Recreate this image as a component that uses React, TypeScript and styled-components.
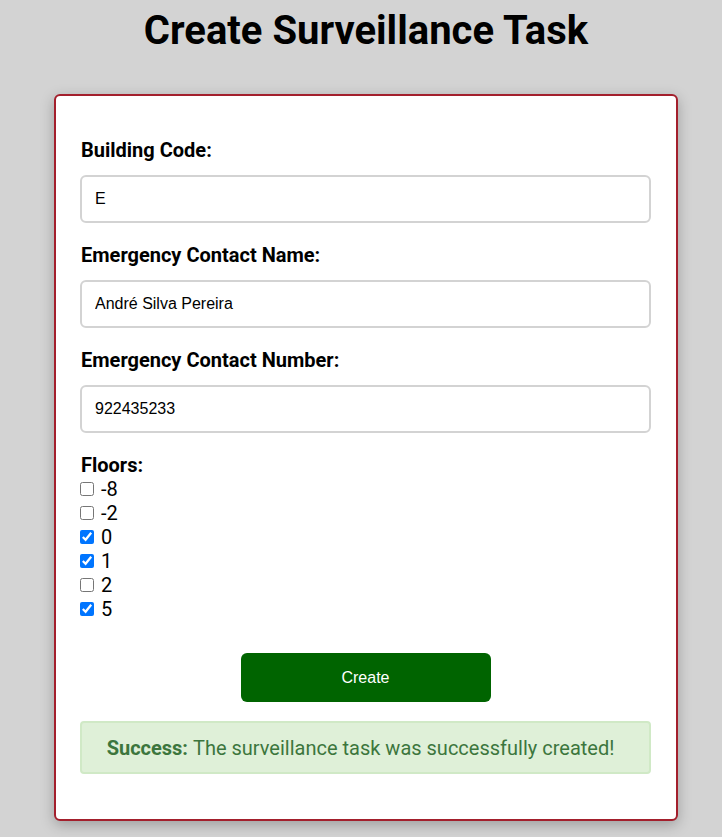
import React from "react";
import styled, { createGlobalStyle } from "styled-components";

const Global = createGlobalStyle`
  html, body { margin: 0; padding: 0; background: #d3d3d3; }
  body { font-family: Roboto, "Liberation Sans", sans-serif; }
`;

const Page = styled.div`
  padding: 0 0 20px 10px;
  display: flex;
  flex-direction: column;
  align-items: center;
`;

const Title = styled.h1`
  font-family: Roboto, sans-serif;
  font-weight: 700;
  font-size: 40px;
  line-height: 46px;
  margin: 8px 0 40px;
  color: #000;
`;

const Card = styled.form`
  box-sizing: border-box;
  width: 624px;
  background: #fff;
  border: 2px solid #a31f2c;
  border-radius: 6px;
  box-shadow: 0 4px 14px rgba(0, 0, 0, 0.25);
  padding: 42px 25px 45px 24px;
  display: flex;
  flex-direction: column;
`;

const Field = styled.div`
  display: flex;
  flex-direction: column;
  margin-bottom: 20px;
`;

const Label = styled.label`
  font-family: Roboto, sans-serif;
  font-weight: 700;
  font-size: 20px;
  line-height: 24px;
  color: #000;
  margin: 0 0 13px 1px;
`;

const Input = styled.input`
  box-sizing: border-box;
  height: 48px;
  width: 100%;
  border: 2px solid #d3d3d3;
  border-radius: 6px;
  padding: 0 13px;
  font-family: "Liberation Sans", Arial, sans-serif;
  font-size: 16px;
  color: #000;
  outline: none;
`;

const FloorsLabel = styled.div`
  font-family: Roboto, sans-serif;
  font-weight: 700;
  font-size: 20px;
  line-height: 24px;
  color: #000;
  margin-left: 1px;
`;

const FloorRow = styled.label`
  display: flex;
  align-items: center;
  height: 24px;
  font-family: Roboto, sans-serif;
  font-size: 20px;
  color: #000;
  input {
    margin: 0 7px 0 0;
    width: 14px;
    height: 14px;
  }
`;

const FloorList = styled.div`
  display: flex;
  flex-direction: column;
  margin-bottom: 32px;
`;

const Button = styled.button`
  align-self: center;
  width: 250px;
  height: 49px;
  border: none;
  border-radius: 6px;
  background: #006400;
  color: #fff;
  font-family: "Liberation Sans", Arial, sans-serif;
  font-size: 16px;
  cursor: pointer;
`;

const Alert = styled.div`
  box-sizing: border-box;
  margin-top: 19px;
  height: 53px;
  padding-right: 10px;
  background: #dff0d8;
  border: 2px solid #d0e9c6;
  border-radius: 4px;
  color: #3c763d;
  font-family: Roboto, sans-serif;
  font-size: 20px;
  display: flex;
  align-items: center;
  justify-content: center;
  strong { font-weight: 700; margin-right: 5px; }
`;

const floors = [
  { v: "-8", c: false },
  { v: "-2", c: false },
  { v: "0", c: true },
  { v: "1", c: true },
  { v: "2", c: false },
  { v: "5", c: true },
];

export default function App() {
  return (
    <>
      <Global />
      <Page>
        <Title>Create Surveillance Task</Title>
        <Card onSubmit={(e) => e.preventDefault()}>
          <Field>
            <Label>Building Code:</Label>
            <Input defaultValue="E" />
          </Field>
          <Field>
            <Label>Emergency Contact Name:</Label>
            <Input defaultValue="André Silva Pereira" />
          </Field>
          <Field>
            <Label>Emergency Contact Number:</Label>
            <Input defaultValue="922435233" />
          </Field>
          <FloorsLabel>Floors:</FloorsLabel>
          <FloorList>
            {floors.map((f) => (
              <FloorRow key={f.v}>
                <input type="checkbox" defaultChecked={f.c} />
                {f.v}
              </FloorRow>
            ))}
          </FloorList>
          <Button type="submit">Create</Button>
          <Alert>
            <strong>Success:</strong> The surveillance task was successfully created!
          </Alert>
        </Card>
      </Page>
    </>
  );
}
